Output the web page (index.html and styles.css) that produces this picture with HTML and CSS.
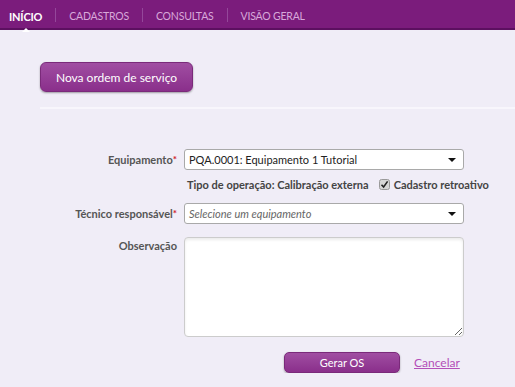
FILE: index.html
```html
<!DOCTYPE html>
<html lang="pt-BR">

<head>
    <meta charset="UTF-8" />
    <title>Nova ordem de serviço</title>
    <link rel="stylesheet" href="styles.css">
</head>

<body>

    <nav class="topnav">
        <a class="nav-item active" href="#">INÍCIO</a>
        <span class="nav-sep"></span>
        <a class="nav-item" href="#">CADASTROS</a>
        <span class="nav-sep"></span>
        <a class="nav-item" href="#">CONSULTAS</a>
        <span class="nav-sep"></span>
        <a class="nav-item" href="#">VISÃO GERAL</a>
    </nav>

    <main class="content">
        <div class="toolbar">
            <button class="btn btn-new">Nova ordem de serviço</button>
        </div>

        <div class="divider"></div>

        <form class="os-form">
            <label class="form-label">Equipamento<span class="req">*</span></label>
            <div class="select">
                <span>PQA.0001: Equipamento 1 Tutorial</span>
                <span class="caret"></span>
            </div>

            <span></span>
            <div class="info-row">
                <span>Tipo de operação: Calibração externa</span>
                <span class="check">
                    <svg width="11" height="11" viewBox="0 0 11 11">
                        <rect x="0.5" y="0.5" width="10" height="10" rx="2" fill="#d6d6d6" stroke="#9a9a9a" />
                        <path d="M2.5 5.8 L4.6 8 L8.6 2.4" fill="none" stroke="#222" stroke-width="1.6" />
                    </svg>
                    Cadastro retroativo
                </span>
            </div>

            <label class="form-label">Técnico responsável<span class="req">*</span></label>
            <div class="select placeholder">
                <span>Selecione um equipamento</span>
                <span class="caret"></span>
            </div>

            <label class="form-label top">Observação</label>
            <textarea class="obs"></textarea>

            <span></span>
            <div class="actions">
                <button type="button" class="btn btn-submit">Gerar OS</button>
                <a class="cancel" href="#">Cancelar</a>
            </div>
        </form>
    </main>

</body>

</html>
```

FILE: styles.css
```css
body {
    margin: 0;
    background: #f0edf7;
    font-family: Lato, "Noto Sans", sans-serif;
    font-size: 11px;
    color: #444;
}

.topnav {
    display: flex;
    align-items: center;
    height: 28px;
    padding-left: 9px;
    background: #7b1c7c;
    border-bottom: 2px solid #5c1060;
}

.nav-item {
    position: relative;
    color: #d8a8da;
    text-decoration: none;
    font-size: 10.5px;
    letter-spacing: -0.2px;
    padding-top: 4px;
}

.nav-item.active {
    color: #fff;
    font-weight: bold;
    font-size: 11px;
}

/* little arrow under the active tab */
.nav-item.active::after {
    content: "";
    position: absolute;
    left: 50%;
    bottom: -9px;
    margin-left: -4px;
    border: 4px solid transparent;
    border-bottom-color: #fff;
    border-top: 0;
}

.nav-sep {
    width: 1px;
    height: 14px;
    background: #94479a;
    margin: 2px 13px 0;
}

.content {
    padding-left: 40px;
}

.toolbar {
    padding-top: 32px;
}

.btn {
    font-family: inherit;
    color: #fff;
    border: 1px solid #7a2a7a;
    cursor: pointer;
    background: linear-gradient(#a04ea2, #8a2f8b);
    box-shadow: 0 1px 2px rgb(0 0 0 / 0.35);
    white-space: nowrap;
    padding: 0;
}

.btn-new {
    width: 153px;
    height: 30px;
    border-radius: 6px;
    font-size: 12px;
}

.divider {
    margin-top: 15px;
    height: 2px;
    background: #f8f6fc;
}

.os-form {
    display: grid;
    grid-template-columns: 137px 280px;
    column-gap: 7px;
    margin-top: 40px;
    align-items: center;
}

.form-label {
    text-align: right;
    font-weight: bold;
    color: #555;
    white-space: nowrap;
}

.form-label.top {
    align-self: start;
    margin-top: 15px;
}

.req {
    color: #d0202a;
    font-size: 10px;
    vertical-align: top;
}

.select {
    display: flex;
    align-items: center;
    justify-content: space-between;
    height: 19px;
    padding: 0 7px 0 4px;
    background: #fff;
    border: 1px solid #a9a9a9;
    border-radius: 3px;
    color: #222;
}

.select.placeholder {
    color: #666;
    font-style: italic;
}

.caret {
    border: 4px solid transparent;
    border-top: 4px solid #111;
    border-bottom: 0;
}

.info-row {
    display: flex;
    align-items: center;
    gap: 10px;
    height: 29px;
    padding: 0 0 4px 3px;
    font-weight: bold;
    color: #444;
    white-space: nowrap;
}

.check {
    display: flex;
    align-items: center;
    gap: 4px;
}

.obs {
    margin-top: 13px;
    height: 98px;
    width: 278px;
    padding: 0;
    border: 1px solid #ccc;
    border-radius: 4px;
    background: #fff;
    box-shadow: inset 0 2px 3px rgb(0 0 0 / 0.08);
    resize: vertical;
    box-sizing: content-box;
}

.actions {
    display: flex;
    align-items: center;
    gap: 14px;
    margin-top: 15px;
    padding-left: 100px;
}

.btn-submit {
    width: 116px;
    height: 21px;
    border-radius: 5px;
    font-size: 11px;
}

.cancel {
    color: #b44fb8;
    font-size: 12px;
}
```
